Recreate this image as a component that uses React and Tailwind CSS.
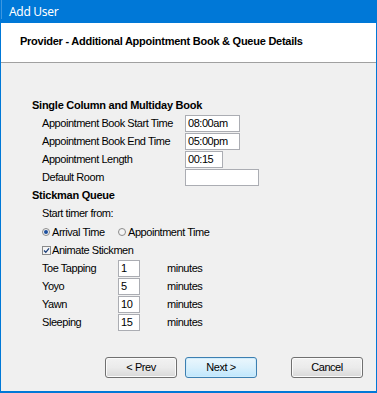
import React from "react";

function Field({ w, value }) {
  return (
    <div
      className="h-[17px] border border-[#abadb3] bg-white pl-[2px] flex items-center text-[11px] tracking-[-0.45px] text-black leading-none"
      style={{ width: w }}
    >
      {value}
    </div>
  );
}

function Radio({ checked }) {
  return (
    <svg width="8" height="8" viewBox="0 0 8 8" className="shrink-0">
      <circle cx="4" cy="4" r="3.5" fill="#f4f4f4" stroke="#8a8a8a" strokeWidth="1" />
      {checked && <circle cx="4" cy="4" r="2" fill="#1c4e9c" />}
    </svg>
  );
}

function Check() {
  return (
    <svg width="9" height="9" viewBox="0 0 9 9" className="shrink-0">
      <rect x="0.5" y="0.5" width="8" height="8" fill="#f4f4f4" stroke="#8a8a8a" />
      <path d="M2 4.5 L3.8 6.3 L7 2.3" fill="none" stroke="#1c3f7a" strokeWidth="1.3" />
    </svg>
  );
}

function Btn({ children, primary }) {
  return (
    <button
      className={
        "w-[72px] h-[21px] rounded-[3px] border text-[11px] tracking-[-0.45px] text-black flex items-center justify-center leading-none " +
        (primary
          ? "border-[#3c7fb1] bg-gradient-to-b from-[#eaf6fd] via-[#d9f0fc] to-[#bee6fd] shadow-[inset_0_0_0_1px_#d0ecfb]"
          : "border-[#707070] bg-gradient-to-b from-[#f2f2f2] via-[#ebebeb] to-[#d8d8d8] shadow-[inset_0_0_0_1px_#fbfbfb]")
      }
    >
      {children}
    </button>
  );
}

export default function App() {
  const rows = [
    ["Appointment Book Start Time", "08:00am", 55],
    ["Appointment Book End Time", "05:00pm", 55],
    ["Appointment Length", "00:15", 38],
    ["Default Room", "", 74],
  ];
  const stick = [
    ["Toe Tapping", "1"],
    ["Yoyo", "5"],
    ["Yawn", "10"],
    ["Sleeping", "15"],
  ];
  return (
    <div className="w-[377px] h-[393px] bg-[#0078d7] flex flex-col font-['Liberation_Sans',Arial,sans-serif] text-black">
      <div className="h-[23px] shrink-0 flex items-center pl-[9px] relative">
        <div className="absolute left-[1px] top-0 h-[19px] w-px bg-[#3d97e0]" />
        <span className="font-['Noto_Sans',sans-serif] text-[12px] tracking-[-0.3px] text-white leading-none">
          Add User
        </span>
      </div>
      <div className="flex-1 mx-px mb-[2px] flex flex-col min-h-0">
        <div className="h-[40px] shrink-0 bg-white border-b border-[#a0a0a0] pt-[10px] pl-[19px]">
          <div className="text-[11px] font-bold tracking-[-0.25px] leading-[16px]">
            Provider - Additional Appointment Book &amp; Queue Details
          </div>
        </div>
        <div className="flex-1 bg-[#f0f0f0] flex flex-col">
          <div className="pt-[33px] pl-[31px] text-[11px] tracking-[-0.45px] leading-none">
            <div className="h-[18px] flex items-center font-bold tracking-[-0.25px]">
              Single Column and Multiday Book
            </div>
            {rows.map(([l, v, w]) => (
              <div key={l} className="h-[18px] flex items-center pl-[10px]">
                <div className="w-[143px]">{l}</div>
                <Field w={w} value={v} />
              </div>
            ))}
            <div className="h-[18px] flex items-center font-bold tracking-[-0.25px]">
              Stickman Queue
            </div>
            <div className="h-[18px] flex items-center pl-[10px]">Start timer from:</div>
            <div className="h-[19px] flex items-center pl-[10px] pt-px">
              <div className="w-[76px] flex items-center gap-[2px]">
                <Radio checked />
                <span>Arrival Time</span>
              </div>
              <div className="flex items-center gap-[2px]">
                <Radio />
                <span>Appointment Time</span>
              </div>
            </div>
            <div className="h-[18px] flex items-center pl-[10px] gap-[1px]">
              <Check />
              <span>Animate Stickmen</span>
            </div>
            {stick.map(([l, v]) => (
              <div key={l} className="h-[18px] flex items-center pl-[10px]">
                <div className="w-[76px]">{l}</div>
                <Field w={22} value={v} />
                <div className="ml-[27px]">minutes</div>
              </div>
            ))}
          </div>
          <div className="mt-[26px] flex pl-[104px] pr-[13px]">
            <Btn>&lt; Prev</Btn>
            <div className="ml-[8px]">
              <Btn primary>Next &gt;</Btn>
            </div>
            <div className="ml-auto">
              <Btn>Cancel</Btn>
            </div>
          </div>
        </div>
      </div>
    </div>
  );
}
